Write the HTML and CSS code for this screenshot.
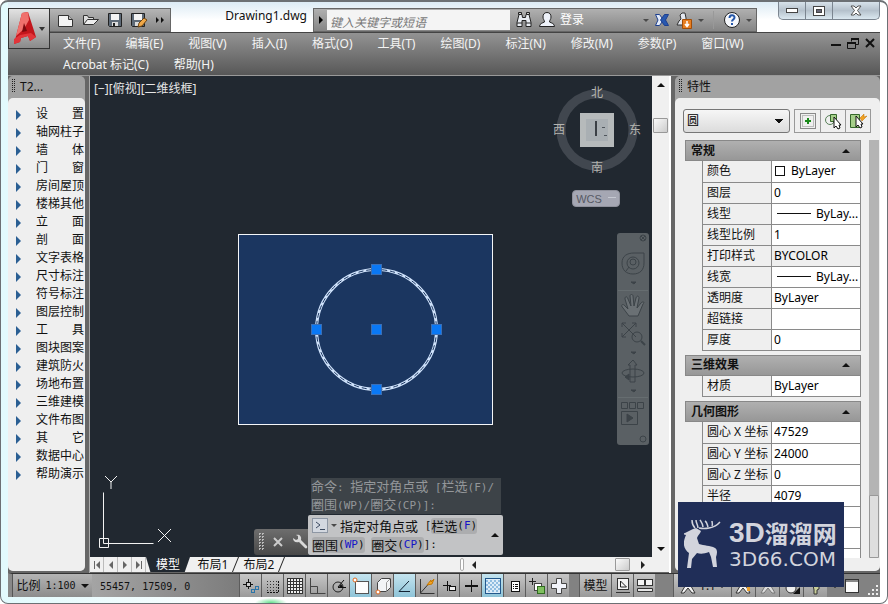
FILE: index.html
```html
<!DOCTYPE html>
<html lang="zh-CN">
<head>
    <meta charset="UTF-8">
    <meta name="viewport" content="width=device-width, initial-scale=1.0">
    <title>Drawing1.dwg</title>
    <link rel="stylesheet" href="styles.css">
</head>
<body>
<div class="window">
    <header class="titlebar">
        <button class="app-btn" aria-label="应用程序菜单">
            <svg width="40" height="40" viewBox="0 0 40 40">
                <path d="M13 4 L19 3 L27 28 L21 32 L19 27 L12 29 L11 33 L5 35 Z" fill="#c3161c"/>
                <path d="M13 4 L19 3 L20 11 L15 20 L7 27 Z" fill="#f0706c"/>
                <path d="M15 14 L18 22 L13 23 Z" fill="#7c0a0e"/>
                <path d="M5 30 L11 26 L22 24 L27 28 L21 32 L19 27 L12 29 L11 33 L5 35 Z" fill="#e2353a"/>
                <path d="M30 18h6l-3 4z" fill="#333"/>
            </svg>
        </button>
        <div class="quick-access">
            <button aria-label="新建"><svg width="18" height="16" viewBox="0 0 18 16"><path d="M1.500 3.500h10l4 4v7h-14z" fill="#f4f4f4" stroke="#333"/><path d="M11.500 3.500v4h4" fill="#bbb" stroke="#333"/></svg></button>
            <button aria-label="打开"><svg width="18" height="16" viewBox="0 0 18 16"><path d="M1.500 12.500v-9h4l1 2h5v3" fill="#ddd" stroke="#333"/><path d="M1.500 12.500l4-5h11l-5 5z" fill="#eee" stroke="#333"/></svg></button>
            <button aria-label="保存"><svg width="16" height="16" viewBox="0 0 16 16"><path d="M1.500 1.500h13v13h-12l-1-1z" fill="#5e6a77" stroke="#222"/><path d="M4 2h8v6h-8z" fill="#f4f4f4"/><path d="M5 10h6v4h-6z" fill="#ddd"/><path d="M6 11h2v3h-2z" fill="#222"/></svg></button>
            <button aria-label="另存为"><svg width="18" height="16" viewBox="0 0 18 16"><path d="M1.500 1.500h13v13h-12l-1-1z" fill="#5e6a77" stroke="#222"/><path d="M4 2h8v6h-8z" fill="#f4f4f4"/><path d="M5 10h6v4h-6z" fill="#ddd"/><path d="M8 15l1-4 5-5 3 2-5 6z" fill="#f0a848" stroke="#6b4312"/></svg></button>
            <button aria-label="更多"><svg width="10" height="8" viewBox="0 0 10 8"><path d="M1 1l3 3-3 3zM6 1l3 3-3 3z" fill="#111"/></svg></button>
        </div>
        <h1 class="doc-title">Drawing1.dwg</h1>
        <div class="infocenter">
            <button class="expand" aria-label="展开"><svg width="6" height="8"><path d="M1 0l4 4-4 4z" fill="#000"/></svg></button>
            <input type="text" placeholder="键入关键字或短语" aria-label="键入关键字或短语">
            <button aria-label="搜索"><svg width="18" height="18" viewBox="0 0 18 18"><path d="M4 3.500h3l.5 3h3l.5-3h3l2 8v4h-5v-6h-4v6h-5v-4z" fill="#e8ecf2" stroke="#222"/><path d="M2 12h5M11 12h5M3.500 1.500h3v2h-3zM11.500 1.500h3v2h-3z" fill="#ccc" stroke="#222"/></svg></button>
            <button class="sign-in"><svg width="18" height="18" viewBox="0 0 18 18"><path d="M9 1.500c3 0 4 2 4 4.500s-1.500 3-1.500 5c2 1 5 1.500 5 4.500h-15c0-3 3-3.500 5-4.500 0-2-1.500-2.500-1.500-5s1-4.500 4-4.500z" fill="#eef2fa" stroke="#222"/></svg><span>登录</span></button>
            <i class="caret far"></i>
            <button aria-label="Exchange"><svg width="16" height="16" viewBox="0 0 16 16"><path d="M1.500 2.500h4l4 5.500-4 5.500h-4l2.500-5.500z" fill="#e4ecfa" stroke="#1d3f8f"/><path d="M14.500 2.500h-4l-4 5.500 4 5.500h4l-3-5.500z" fill="#2858b0" stroke="#1d3f8f"/></svg></button>
            <button aria-label="更新"><svg width="18" height="18" viewBox="0 0 18 18"><path d="M2 14l2-4 2-2-1-4 2-2h3l1 5v7z" fill="#e4e8f0" stroke="#333"/><path d="M7.500 8.500h9v9h-9z" fill="#e87f22" stroke="#a34d07"/><path d="M12 10v5M10 13l2 2.500 2-2.500" stroke="#fff" stroke-width="1.500" fill="none"/></svg></button>
            <i class="caret"></i>
            <span class="rule"></span>
            <button aria-label="帮助"><svg width="18" height="18" viewBox="0 0 18 18"><circle cx="9" cy="9" r="7.500" fill="#f6f8fc" stroke="#222"/><path d="M6.500 7c0-3.500 5-3.500 5-.5 0 2-2.500 2-2.500 4M9 12v2" fill="none" stroke="#2456a8" stroke-width="2"/></svg></button>
            <i class="caret"></i>
        </div>
        <div class="win-btns">
            <button aria-label="最小化"><svg width="14" height="8"><rect x="1.500" y="1.500" width="11" height="4" fill="#fff" stroke="#444"/></svg></button>
            <button aria-label="最大化"><svg width="12" height="10"><rect x=".5" y=".5" width="11" height="9" fill="#fff" stroke="#444"/><rect x="3.500" y="3.500" width="5" height="3" fill="#667" stroke="#444"/></svg></button>
            <button class="close" aria-label="关闭"><svg width="12" height="11" viewBox="0 0 12 11"><path d="M1 1h3l2 2 2-2h3l-3.500 4.500 3.500 4.500h-3l-2-2-2 2h-3l3.500-4.500z" fill="#fff" stroke="#555"/></svg></button>
        </div>
    </header>

    <div class="menu-area">
        <nav class="menubar">
            <a href="#">文件(F)</a>
            <a href="#">编辑(E)</a>
            <a href="#">视图(V)</a>
            <a href="#">插入(I)</a>
            <a href="#">格式(O)</a>
            <a href="#">工具(T)</a>
            <a href="#">绘图(D)</a>
            <a href="#">标注(N)</a>
            <a href="#">修改(M)</a>
            <a href="#">参数(P)</a>
            <a href="#">窗口(W)</a>
            <a href="#">Acrobat 标记(C)</a>
            <a href="#">帮助(H)</a>
        </nav>
        <div class="mdi-btns">
            <button aria-label="最小化文档"><svg width="12" height="12"><path d="M1 8h10" stroke="#111" stroke-width="2"/></svg></button>
            <button aria-label="还原文档"><svg width="12" height="12"><path d="M4.500 4.500v-3h7v6h-3M.5 5.500h8v6h-8z" fill="none" stroke="#111"/><path d="M4 2h8M0 6h9" stroke="#111" stroke-width="2"/></svg></button>
            <button aria-label="关闭文档"><svg width="12" height="12"><path d="M2 2l8 8M10 2l-8 8" stroke="#111" stroke-width="2"/></svg></button>
        </div>
    </div>

    <main class="workspace">
        <aside class="panel tools">
            <h2 class="panel-title"><i class="grip"></i>T2...</h2>
            <ul class="tool-list">
                <li><a href="#"><span>设</span><span>置</span></a></li>
                <li><a href="#">轴网柱子</a></li>
                <li><a href="#"><span>墙</span><span>体</span></a></li>
                <li><a href="#"><span>门</span><span>窗</span></a></li>
                <li><a href="#">房间屋顶</a></li>
                <li><a href="#">楼梯其他</a></li>
                <li><a href="#"><span>立</span><span>面</span></a></li>
                <li><a href="#"><span>剖</span><span>面</span></a></li>
                <li><a href="#">文字表格</a></li>
                <li><a href="#">尺寸标注</a></li>
                <li><a href="#">符号标注</a></li>
                <li><a href="#">图层控制</a></li>
                <li><a href="#"><span>工</span><span>具</span></a></li>
                <li><a href="#">图块图案</a></li>
                <li><a href="#">建筑防火</a></li>
                <li><a href="#">场地布置</a></li>
                <li><a href="#">三维建模</a></li>
                <li><a href="#">文件布图</a></li>
                <li><a href="#"><span>其</span><span>它</span></a></li>
                <li><a href="#">数据中心</a></li>
                <li><a href="#">帮助演示</a></li>
            </ul>
        </aside>

        <section class="viewport">
            <div class="view-row">
                <div class="canvas">
                    <div class="view-label">[−][俯视][二维线框]</div>

                    <svg class="drawing" width="255" height="191" viewBox="0 0 255 191">
                        <rect x=".5" y=".5" width="254" height="190" fill="#1b3660" stroke="#f4f6f8"/>
                        <circle cx="138.500" cy="95.500" r="60" fill="none" stroke="#cfe2fb" stroke-width="3"/>
                        <circle cx="138.500" cy="95.500" r="60" fill="none" stroke="#1b3660" stroke-width="1" stroke-dasharray="5 3"/>
                        <g fill="#0a78f5" stroke="#3b6fb5">
                            <rect x="133.500" y="30.500" width="10" height="10"/>
                            <rect x="133.500" y="90.500" width="10" height="10"/>
                            <rect x="133.500" y="150.500" width="10" height="10"/>
                            <rect x="73.500" y="90.500" width="10" height="10"/>
                            <rect x="193.500" y="90.500" width="10" height="10"/>
                        </g>
                    </svg>

                    <svg class="ucs" width="76" height="76" viewBox="0 0 76 76" fill="none" stroke="#f2f2f2">
                        <path d="M1.500 63.500h9v9h-9zM5.500 68.500v-51M5.500 68.500h50"/>
                        <path d="M7 1l6 6 6-6M13 7v7M60 54l13 13M73 54l-13 13"/>
                    </svg>

                    <div class="viewcube">
                        <svg width="90" height="90" viewBox="0 0 90 90">
                            <circle cx="45" cy="45" r="36" fill="none" stroke="#41474f" stroke-width="9"/>
                            <rect x="28" y="28" width="34" height="34" fill="#b6babb"/>
                            <rect x="34" y="34" width="22" height="22" fill="#a9afb3"/>
                            <path d="M44 36v15" stroke="#3b4046" stroke-width="2"/>
                            <path d="M50 42.500h3M52 50.500h3" stroke="#50565c"/>
                        </svg>
                        <span class="north">北</span>
                        <span class="west">西</span>
                        <span class="east">东</span>
                        <span class="south">南</span>
                    </div>
                    <button class="wcs">WCS<svg width="8" height="4"><path d="M0 .5h8" stroke="#c6c9d2"/></svg></button>

                    <div class="navbar">
                        <svg width="32" height="212" viewBox="0 0 32 212" fill="none" stroke="#3c4348">
                            <circle cx="26" cy="5" r="3"/><path d="M24 3l4 4M28 3l-4 4"/>
                            <path d="M5 30c0-7 5-10 12-10h10v10c0 7-4 11-11 11s-11-4-11-11z"/>
                            <circle cx="16" cy="30" r="6"/><circle cx="16" cy="29" r="3"/><path d="M12 34l-3 4"/>
                            <path d="M14 49h5l-2 2z" fill="#3c4348"/>
                            <path d="M1 57.500h30" stroke="#666d70"/>
                            <path d="M12 83l-6-8c-3-3 0-5 2-2l3 3-3-10c0-3 2-3 3 0l3 7-1-10c0-2 3-2 3 0l1 10 2-8c1-3 3-2 3 0l-2 10 4-5c2-2 4-1 2 1l-5 12z" fill="#6a7074"/>
                            <path d="M5 90l14 14M19 90l-14 14M5 94v-4h4M15 90h4v4M5 100v4h4"/>
                            <circle cx="20" cy="104" r="5"/><path d="M24 108l4 4" stroke-width="2"/>
                            <path d="M14 119h5l-2 2z" fill="#3c4348"/>
                            <path d="M13 149v-17h-2l5-5 4 5h-2v17z"/>
                            <ellipse cx="16" cy="140" rx="11" ry="4"/><path d="M8 144l4-3v6z" fill="#3c4348"/>
                            <path d="M14 157h5l-2 2z" fill="#3c4348"/>
                            <path d="M1 164.500h30" stroke="#666d70"/>
                            <path d="M4.500 169.500h6v6h-6zM12.500 169.500h6v6h-6zM20.500 169.500h6v6h-6zM4.500 178.500h16v13h-16z"/>
                            <path d="M10 181l6 4-6 4z" fill="#3c4348"/>
                            <circle cx="26" cy="206" r="3"/>
                        </svg>
                    </div>

                    <div class="cmd">
                        <div class="cmd-handle">
                            <i class="grip light"></i>
                            <button aria-label="关闭命令行"><svg width="12" height="12"><path d="M2 2l8 8M10 2l-8 8" stroke="#ccc" stroke-width="2"/></svg></button>
                            <button aria-label="自定义"><svg width="16" height="16" viewBox="0 0 16 16"><path d="M1 4l3 2 2-1V2L4 1c3-1 6 1 5 5l6 6c1 2-1 3-2 2L7 8C3 9 1 7 1 4z" fill="#d8d8d8"/></svg></button>
                        </div>
                        <div class="cmd-main">
                            <p class="cmd-history">命令<span>: </span>指定对角点或<span> [</span>栏选<span>(F)/</span><br>圈围<span>(WP)/</span>圈交<span>(CP)]:</span></p>
                            <div class="cmd-line">
                                <div>
                                    <div class="cmd-row">
                                        <i class="prompt"><svg width="14" height="13"><path d="M3 3l4 3-4 3M7 10.500h5" stroke="#3c4a60" fill="none"/></svg></i><i class="caret"></i>指定对角点或<span> [</span><button>栏选<span>(<b>F</b>)</span></button>
                                    </div>
                                    <div class="cmd-row">
                                        <button>圈围<span>(<b>WP</b>)</span></button><span> </span><button>圈交<span>(<b>CP</b>)</span></button><span>]:</span>
                                    </div>
                                </div>
                                <i class="up"></i>
                            </div>
                        </div>
                    </div>
                </div>
                <div class="vscroll"><i class="up"></i><i class="thumb"></i><i class="down"></i></div>
            </div>
            <div class="tab-row">
                <div class="tab-nav">
                    <button aria-label="第一个"><svg width="8" height="8"><path d="M1.500 0v8" stroke="#666"/><path d="M7 0v8l-4-4z" fill="#666"/></svg></button>
                    <button aria-label="上一个"><svg width="8" height="8"><path d="M6 0v8l-4-4z" fill="#666"/></svg></button>
                    <button aria-label="下一个"><svg width="8" height="8"><path d="M2 0v8l4-4z" fill="#666"/></svg></button>
                    <button aria-label="最后一个"><svg width="8" height="8"><path d="M6.500 0v8" stroke="#666"/><path d="M1 0v8l4-4z" fill="#666"/></svg></button>
                </div>
                <div class="tabs">
                    <button class="tab active">模型</button>
                    <button class="tab">布局1</button>
                    <button class="tab">布局2</button>
                </div>
                <div class="hscroll"><i class="splitter"></i><i class="left"></i><i class="thumb"></i><i class="right"></i></div>
            </div>
        </section>

        <aside class="panel props">
            <h2 class="panel-title"><i class="grip"></i>特性</h2>
            <div class="picker">
                <select aria-label="对象类型"><option>圆</option></select>
                <div class="picker-btns">
                    <button aria-label="切换 PICKADD"><svg width="18" height="18"><rect x="1.500" y="1.500" width="15" height="15" fill="none" stroke="#222" stroke-dasharray="1 1"/><rect x="3.500" y="3.500" width="11" height="11" fill="none" stroke="#888" stroke-dasharray="1 1"/><path d="M9 6v6M6 9h6" stroke="#1a8a1a" stroke-width="2"/></svg></button>
                    <button aria-label="选择对象"><svg width="18" height="18"><circle cx="6" cy="8" r="4.500" fill="none" stroke="#577f57"/><path d="M6.500 2.500h6v7h-6z" fill="#a6d08a" stroke="#36682c"/><path d="M10 5v11l2-2 2 3 2-1-1-3h2z" fill="#fff" stroke="#111"/></svg></button>
                    <button aria-label="快速选择"><svg width="18" height="18"><path d="M1.500 2.500h9v13h-9z" fill="#a6d08a" stroke="#36682c"/><path d="M7 4v11l2-2 2 3 2-1-1-3h2z" fill="#fff" stroke="#111"/><path d="M11 6l4-4 0 3 3-1-5 5z" fill="#f0a020" stroke="#c07000" stroke-width=".5"/></svg></button>
                </div>
            </div>
            <div class="prop-body">
                <div class="prop-scroll">
                    <button class="group">常规<i class="up"></i></button>
                    <table>
                        <tr><th><label for="p-color">颜色</label></th><td><div class="value"><i class="swatch"></i><input id="p-color" value="ByLayer"></div></td></tr>
                        <tr><th><label for="p-layer">图层</label></th><td><div class="value"><input id="p-layer" value="0"></div></td></tr>
                        <tr><th><label for="p-ltype">线型</label></th><td><div class="value"><i class="line"></i><input id="p-ltype" value="ByLay..."></div></td></tr>
                        <tr><th><label for="p-lscale">线型比例</label></th><td><div class="value"><input id="p-lscale" value="1"></div></td></tr>
                        <tr class="locked"><th><label for="p-plot">打印样式</label></th><td><div class="value"><input id="p-plot" value="BYCOLOR" readonly></div></td></tr>
                        <tr><th><label for="p-lweight">线宽</label></th><td><div class="value"><i class="line"></i><input id="p-lweight" value="ByLay..."></div></td></tr>
                        <tr><th><label for="p-trans">透明度</label></th><td><div class="value"><input id="p-trans" value="ByLayer"></div></td></tr>
                        <tr><th><label for="p-link">超链接</label></th><td><div class="value"><input id="p-link" value=""></div></td></tr>
                        <tr><th><label for="p-thick">厚度</label></th><td><div class="value"><input id="p-thick" value="0"></div></td></tr>
                    </table>
                    <button class="group">三维效果<i class="up"></i></button>
                    <table>
                        <tr><th><label for="p-mat">材质</label></th><td><div class="value"><input id="p-mat" value="ByLayer"></div></td></tr>
                    </table>
                    <button class="group">几何图形<i class="up"></i></button>
                    <table>
                        <tr><th><label for="p-x">圆心 X 坐标</label></th><td><div class="value"><input id="p-x" value="47529"></div></td></tr>
                        <tr><th><label for="p-y">圆心 Y 坐标</label></th><td><div class="value"><input id="p-y" value="24000"></div></td></tr>
                        <tr><th><label for="p-z">圆心 Z 坐标</label></th><td><div class="value"><input id="p-z" value="0"></div></td></tr>
                        <tr><th><label for="p-r">半径</label></th><td><div class="value"><input id="p-r" value="4079"></div></td></tr>
                        <tr><th></th><td></td></tr>
                        <tr><th></th><td></td></tr>
                        <tr><th></th><td></td></tr>
                    </table>
                </div>
                <div class="prop-bar"><i class="thumb"></i></div>
            </div>
        </aside>
    </main>

    <footer class="statusbar">
        <button class="scale">比例 <span>1:100</span><i class="down"></i></button>
        <div class="coords">55457, 17509, 0</div>
        <div class="toggles">
            <button aria-label="推断约束"><svg width="18" height="18"><path d="M1 7.500h10M6.500 2v10" stroke="#111"/><rect x="4.500" y="5.500" width="4" height="4" fill="#ccc" stroke="#111"/><rect x="9.500" y="12.500" width="3" height="3" fill="none" stroke="#2c74a8"/><rect x="13.500" y="9.500" width="3" height="3" fill="none" stroke="#2c74a8"/></svg></button>
            <button aria-label="捕捉"><svg width="18" height="18"><path d="M3 4.500h10M3 7.500h10M3 10.500h10M3 13.500h10" stroke="#333" stroke-dasharray="1 2"/><path d="M14.500 4v11M3 15.500h12" stroke="#111" stroke-dasharray="2 1"/></svg></button>
            <button aria-label="栅格"><svg width="18" height="18"><path d="M1 1h16v16h-16z" fill="#eee"/><path d="M1 1.500h16M1 4.500h16M1 7.500h16M1 10.500h16M1 13.500h16M1 16.500h16M1.500 1v16M4.500 1v16M7.500 1v16M10.500 1v16M13.500 1v16M16.500 1v16" stroke="#333"/></svg></button>
            <button aria-label="正交"><svg width="18" height="18"><path d="M2.500 1v15.500h15M2.500 9.500h7v7" fill="none" stroke="#444"/></svg></button>
            <button aria-label="极轴"><svg width="18" height="18"><circle cx="8" cy="10" r="5" fill="none" stroke="#222"/><path d="M8 10.500h8M8 10l6-7" stroke="#111"/><path d="M11 7l2 3h-4z" fill="#111"/></svg></button>
            <button class="on" aria-label="对象捕捉"><svg width="18" height="18"><rect x="3.500" y="4.500" width="13" height="12" fill="#fdfdfd" stroke="#555"/><circle cx="3" cy="3" r="2" fill="#fff" stroke="#e06a20"/></svg></button>
            <button aria-label="三维对象捕捉"><svg width="18" height="18"><path d="M3.500 5.500l4-4h9v9l-4 4h-9z" fill="#f2f4f6" stroke="#444"/><path d="M12.500 14.500v-9l4-4" fill="none" stroke="#999"/><circle cx="4" cy="15" r="2" fill="#fff" stroke="#e06a20"/></svg></button>
            <button class="on" aria-label="对象追踪"><svg width="18" height="18"><path d="M13 4l-10 10.500h11" stroke="#123" fill="none"/></svg></button>
            <button aria-label="动态 UCS"><svg width="18" height="18"><path d="M2.500 2v14.500h14M2.500 16l8-9" fill="none" stroke="#333"/><path d="M9 8l4-5 0 2 3-3-2 5z" fill="#f5a623" stroke="#c77800"/></svg></button>
            <button aria-label="动态输入"><svg width="18" height="18"><path d="M3 8.500h8M7.500 4v10" stroke="#111"/><rect x="9.500" y="9.500" width="6" height="4" fill="#eee" stroke="#111"/></svg></button>
            <button aria-label="线宽"><svg width="18" height="18"><path d="M3 9h13" stroke="#111" stroke-width="2"/><path d="M9.500 3v12" stroke="#111"/></svg></button>
            <button class="on" aria-label="透明度"><svg width="18" height="18"><rect x="1.500" y="1.500" width="15" height="15" fill="#dcecf8" stroke="#22588c"/><path d="M2 4h14M2 8h14M2 12h14" stroke="#8fbde0" stroke-width="2" stroke-dasharray="2 2"/><path d="M4 6h12M4 10h12M4 14h12" stroke="#8fbde0" stroke-width="2" stroke-dasharray="2 2"/></svg></button>
            <button aria-label="快捷特性"><svg width="18" height="18"><rect x="5.500" y="4.500" width="8" height="10" fill="#fff" stroke="#111"/><path d="M7 7.500h5M7 9.500h5M7 11.500h5" stroke="#111" stroke-dasharray="1 1 3 0"/></svg></button>
            <button aria-label="选择循环"><svg width="18" height="18"><path d="M1 4.500h7M4.500 1v7" stroke="#222"/><rect x="6.500" y="6.500" width="7" height="7" fill="#fff" stroke="#444"/><rect x="9.500" y="9.500" width="7" height="7" fill="#7fbf5f" stroke="#2f6a1f"/></svg></button>
            <button aria-label="注释监视器"><svg width="18" height="18"><path d="M6.500 1.500h5v5h5v5h-5v5h-5v-5h-5v-5h5z" fill="#f2f4fa" stroke="#444"/></svg></button>
        </div>
        <div class="spacer"></div>
        <div class="toggles space">
            <button class="text">模型</button>
            <button aria-label="快速查看布局"><svg width="18" height="18"><rect x="3.500" y="1.500" width="11" height="11" fill="#f4f4f4" stroke="#333"/><path d="M6.500 4v6h6z" fill="none" stroke="#222"/><path d="M2 15.500h14" stroke="#333"/></svg></button>
            <button aria-label="快速查看图形"><svg width="18" height="18"><rect x="1.500" y="2.500" width="7" height="6" fill="#f4f4f4" stroke="#333"/><rect x="9.500" y="2.500" width="7" height="6" fill="#f4f4f4" stroke="#333"/><path d="M1.500 11.500h15v3h-15z" fill="#e6e6e6" stroke="#333"/></svg></button>
        </div>
        <div class="spacer wide"></div>
        <div class="anno">
            <button><svg width="18" height="18"><path d="M9 4l7 12h-3l-4-5-4 5h-3z" fill="#f4f4f4" stroke="#333"/></svg>1:1<i class="down"></i></button>
            <button aria-label="注释可见性"><svg width="18" height="18"><path d="M8 4l7 12h-3l-4-5-4 5h-3z" fill="#f4f4f4" stroke="#333"/><path d="M12 9h3v5h-3z" fill="#e8a030"/></svg></button>
            <button aria-label="自动缩放"><svg width="18" height="18"><path d="M9 4l7 12h-3l-4-5-4 5h-3z" fill="#ddd" stroke="#777"/></svg></button>
            <button aria-label="切换工作空间"><svg width="18" height="18"><circle cx="8" cy="11" r="5" fill="#eee" stroke="#333"/><path d="M17 10v7h-7z" fill="#111"/></svg></button>
            <button aria-label="锁定"><svg width="18" height="18"><path d="M6 8h6v4l-2 1v4h-3v-4z" fill="#c9cf9a" stroke="#333"/></svg></button>
        </div>
        <i class="down end"></i>
        <button class="clean" aria-label="全屏显示"><svg width="16" height="16"><rect x="1.500" y="1.500" width="13" height="13" fill="#fcfcfc" stroke="#333"/><path d="M2 3h12" stroke="#888" stroke-width="2"/></svg></button>
        <svg class="resize" width="13" height="13"><g fill="#eee"><path d="M9 1h2v2h-2zM5 5h2v2h-2zM9 5h2v2h-2zM1 9h2v2h-2zM5 9h2v2h-2zM9 9h2v2h-2z"/></g></svg>
    </footer>

    <div class="brand">
        <svg width="38" height="52" viewBox="0 0 38 52">
            <path d="M1 14l8-4 3-1 5 3c-1 3-3 4-4 7l2 6c5 2 11 1 16 4 3 2 2 6 1 9l1 10h-4l-2-10-2-5c-5 2-9 2-12 1l-5 6-1 9h-4l2-15c-5-4-7-9-3-18l-4-1z" fill="#d2d4dd"/>
            <path d="M11 9C9 7 8 5 8 1M14 9c0-3-2-5-2-8M15 9c5 1 15 1 21-6M19 8c0-3-1-4-3-7M24 8c-1-3-1-5-3-6M28 7c1-2 0-3 0-5" fill="none" stroke="#d2d4dd" stroke-width="1.500"/>
        </svg>
        <div>
            <div class="brand-name"><span>3D</span>溜溜网</div>
            <div class="brand-url">3D66.COM</div>
        </div>
    </div>
</div>
</body>
</html>
```
FILE: styles.css
```css
* {
    margin: 0;
    padding: 0;
    box-sizing: border-box;
}

body {
    font-family: "Noto Sans", "Noto Sans CJK SC", sans-serif;
    font-size: 12px;
    line-height: 16px;
    color: #111;
    background: #fff;
}

button {
    font: inherit;
    color: inherit;
    background: none;
    border: none;
    display: flex;
    align-items: center;
    justify-content: center;
}

a {
    color: inherit;
    text-decoration: none;
}

svg {
    display: block;
    flex: none;
}

/* Window frame */
.window {
    position: relative;
    display: flex;
    flex-direction: column;
    height: 100vh;
    min-height: 560px;
    padding: 0 7px 6px;
    border: 1px solid #6c7074;
    border-top-width: 2px;
    border-radius: 8px;
    background:
        radial-gradient(ellipse 16px 5px at 270px 100%, #5fe08a, transparent),
        linear-gradient(90deg, #e2fafd, #fff 30%);
}

/* Small arrows */
.up, .down, .left, .right, .caret {
    flex: none;
    border: 4px solid transparent;
}

.up {
    border-top: none;
    border-bottom-color: #111;
}

.down {
    border-bottom: none;
    border-top-color: #111;
}

.left {
    border-left: none;
    border-right-color: #222;
}

.right {
    border-right: none;
    border-left-color: #222;
}

.caret {
    border-width: 3px;
    border-bottom: none;
    border-top-color: #4a4a4a;
}

.grip {
    flex: none;
    width: 5px;
    height: 13px;
    background: conic-gradient(#222 25%, transparent 0) 0 0 / 2px 2px;
}

.grip.light {
    height: 18px;
    width: 6px;
    background: conic-gradient(#bbb 25%, transparent 0) 0 0 / 3px 3px;
}

/* Title bar */
.titlebar {
    position: relative;
    display: flex;
    height: 30px;
    padding-top: 6px;
    background: linear-gradient(#dcebf5, #fff 60%);
}

.app-btn {
    position: absolute;
    left: 0;
    top: 6px;
    width: 42px;
    height: 41px;
    border: 1px solid #333;
    background: linear-gradient(#e2e2e2, #8a8a8a);
    z-index: 1;
}

.quick-access {
    display: flex;
    align-items: center;
    gap: 7px;
    width: 163px;
    padding-left: 49px;
    border: 1px solid #666;
    border-left: none;
    background: linear-gradient(#b5b5b5, #868686);
}

.doc-title {
    flex: 0 0 142px;
    padding-right: 6px;
    text-align: right;
    font-size: 12px;
    font-weight: 400;
}

.infocenter {
    flex: 1;
    display: flex;
    align-items: center;
    gap: 5px;
    min-width: 0;
    border: 1px solid #666;
    background: linear-gradient(#b0b0b0, #858585);
    color: #fff;
}

.infocenter .expand {
    width: 13px;
    margin-right: -5px;
}

.infocenter input {
    flex: 1;
    min-width: 60px;
    height: 20px;
    padding: 2px 3px 0;
    border: none;
    background: #f4f4f4;
    font: italic 12px "Noto Sans CJK SC", sans-serif;
}

.infocenter input::placeholder {
    color: #777;
}

.sign-in {
    gap: 4px;
}

.infocenter .far {
    margin-left: 54px;
}

.rule {
    width: 1px;
    height: 18px;
    margin: 0 4px;
    background: #999;
}

.infocenter .caret:last-child {
    margin-right: 4px;
}

.win-btns {
    display: flex;
    height: 18px;
    margin: -6px 0 0 21px;
    border: 1px solid #7b8590;
    border-top: none;
    border-radius: 0 0 5px 5px;
    background: linear-gradient(#d7e2ea, #b5c1cc 50%, #dbe8f0);
}

.win-btns button {
    width: 27px;
    border-right: 1px solid #7b8590;
}

.win-btns .close {
    width: 46px;
    border-right: none;
}

/* Menu */
.menu-area {
    display: flex;
    justify-content: space-between;
    padding: 0 4px 0 55px;
    border-top: 1px solid #444;
    border-bottom: 1px solid #999;
    background: linear-gradient(#939393, #575757);
}

.menubar {
    display: flex;
    flex-wrap: wrap;
    column-gap: 25px;
    color: #f4f4f4;
    line-height: 21px;
}

.mdi-btns {
    display: flex;
    gap: 5px;
    height: 20px;
}

/* Workspace */
.workspace {
    flex: 1;
    display: flex;
    min-height: 0;
    background: #666;
}

.panel {
    display: flex;
    flex-direction: column;
    margin-bottom: 2px;
    border-radius: 5px;
    overflow: hidden;
    background: #a2a2a2;
}

.panel-title {
    display: flex;
    gap: 4px;
    height: 22px;
    padding: 3px 3px 0;
    font-size: 12px;
    font-weight: 400;
}

.tools {
    flex: 0 0 77px;
}

.tool-list {
    flex: 1;
    padding-top: 7px;
    list-style: none;
    border-radius: 5px 5px 0 0;
    background: #efefef;
}

.tool-list a {
    display: flex;
    justify-content: space-between;
    position: relative;
    width: 76px;
    padding-left: 28px;
    line-height: 18px;
    white-space: nowrap;
}

.tool-list a::before {
    content: "";
    position: absolute;
    left: 8px;
    top: 5px;
    border: 5px solid transparent;
    border-left-color: #2b5f93;
    border-right: none;
}

.viewport {
    flex: 1;
    display: flex;
    flex-direction: column;
    min-width: 0;
    margin: 0 4px 0 4px;
    border-left: 1px solid #aaa;
    border-right: 2px solid #fff;
}

.view-row {
    flex: 1;
    display: flex;
    min-height: 0;
}

.canvas {
    position: relative;
    flex: 1;
    overflow: hidden;
    background: #212830;
}

.view-label {
    padding: 5px 4px;
    color: #e6e6e6;
}

.drawing {
    position: absolute;
    left: 148px;
    top: 158px;
}

.ucs {
    position: absolute;
    left: 8px;
    bottom: 6px;
}

.viewcube {
    position: absolute;
    right: 10px;
    top: 9px;
    width: 90px;
    height: 90px;
    color: #b4b4b0;
}

.viewcube span {
    position: absolute;
}

.north {
    left: 39px;
    top: 0;
}

.south {
    left: 39px;
    bottom: -1px;
}

.west {
    left: 1px;
    top: 37px;
}

.east {
    right: 1px;
    top: 37px;
}

.wcs {
    position: absolute;
    right: 32px;
    top: 114px;
    gap: 6px;
    width: 48px;
    height: 17px;
    border: 1px solid #8f919c;
    border-radius: 4px;
    background: #a5a7b3;
    color: #565964;
    font: 11px "Liberation Sans", sans-serif;
}

.navbar {
    position: absolute;
    right: 3px;
    top: 157px;
    border-radius: 3px;
    background: #5a6064;
}

/* Command line */
.cmd {
    position: absolute;
    left: 164px;
    bottom: 2px;
    display: flex;
    align-items: flex-end;
    font-size: 13px;
}

.cmd span {
    font-family: "DejaVu Sans Mono", monospace;
    font-size: 11px;
    white-space: pre;
}

.cmd-handle {
    display: flex;
    align-items: center;
    gap: 8px;
    width: 54px;
    height: 26px;
    padding-left: 4px;
    border-radius: 3px 0 0 3px;
    background: linear-gradient(#6e6e6e, #484848);
}

.cmd-history {
    width: 190px;
    margin: 0 0 1px 3px;
    line-height: 16px;
    background: #3d4348;
    color: #94979a;
    white-space: nowrap;
}

.cmd-line {
    display: flex;
    align-items: center;
    justify-content: space-between;
    width: 195px;
    height: 40px;
    padding: 0 4px;
    border-radius: 2px;
    background: #c2c3c5;
}

.cmd-row {
    display: flex;
    align-items: center;
    height: 19px;
    white-space: nowrap;
}

.cmd-row button {
    height: 16px;
    border-radius: 3px;
    background: #acadaf;
}

.cmd-row b {
    font-weight: 400;
    color: #1414c8;
}

.cmd-row .caret {
    margin: 0 3px;
}

.prompt {
    border: 1px solid #8e97a4;
    background: #d3d8e0;
}

/* Scroll bars */
.vscroll {
    display: flex;
    flex-direction: column;
    align-items: center;
    width: 17px;
    padding: 7px 0 6px;
    background: #f0f0f0;
}

.vscroll .down {
    margin-top: auto;
}

.vscroll .thumb {
    width: 15px;
    height: 15px;
    margin-top: 31px;
}

.thumb {
    flex: none;
    border: 1px solid #999;
    border-radius: 1px;
    background: linear-gradient(135deg, #fafafa, #ccc);
}

.tab-row {
    display: flex;
    height: 15px;
    margin-bottom: 1px;
    background: #f0f0f0;
}

.tab-nav {
    display: flex;
}

.tab-nav button {
    width: 14px;
    border-right: 1px solid #bbb;
}

.tabs {
    display: flex;
}

.tab {
    position: relative;
    width: 46px;
}

.tab::after {
    content: "";
    position: absolute;
    top: 0;
    right: 0;
    bottom: 0;
    border-right: 1px solid #222;
    transform: skewX(-22deg);
}

.tab.active {
    width: 44px;
    color: #fff;
    background: #212830;
    clip-path: polygon(0 0, 100% 0, 88% 100%, 10% 100%);
}

.hscroll {
    flex: 1;
    display: flex;
    align-items: center;
    padding-right: 24px;
}

.splitter {
    width: 4px;
    height: 13px;
    margin-left: auto;
    border: 1px solid #aaa;
    border-radius: 2px;
    background: #fff;
}

.hscroll .left {
    margin: 0 139px 0 8px;
}

.hscroll .thumb {
    width: 15px;
    height: 13px;
    margin-right: 11px;
}

/* Properties palette */
.props {
    flex: 0 0 205px;
}

.picker {
    display: flex;
    align-items: center;
    gap: 4px;
    padding: 11px 9px 7px 8px;
    border-radius: 5px 5px 0 0;
    background: #efefef;
}

.picker select {
    flex: 1;
    height: 24px;
    padding: 0 3px;
    border: 1px solid #777;
    border-radius: 3px;
    appearance: none;
    background:
        conic-gradient(from -39deg at 50% 100%, #111 78deg, transparent 0) right 6px center / 8px 5px no-repeat,
        linear-gradient(#f6f6f6, #dcdcdc);
    background:
        linear-gradient(to bottom left, #111 50%, transparent 50%) right 10px center / 4px 5px no-repeat,
        linear-gradient(to bottom right, #111 50%, transparent 50%) right 6px center / 4px 5px no-repeat,
        linear-gradient(#f6f6f6, #dcdcdc);
    font: inherit;
}

.picker-btns {
    display: flex;
    border: 1px solid #999;
}

.picker-btns button {
    width: 25px;
    height: 22px;
}

.picker-btns button + button {
    border-left: 1px solid #999;
}

.prop-body {
    flex: 1;
    display: flex;
    justify-content: space-between;
    min-height: 0;
    padding: 0 1px 13px 10px;
    background: #efefef;
}

.prop-scroll {
    width: 176px;
    overflow: hidden;
}

.group {
    justify-content: space-between;
    width: 100%;
    height: 21px;
    padding: 0 10px 0 5px;
    border: 1px solid #888;
    background: linear-gradient(#b0b0b0, #979797);
    font-weight: 700;
}

.prop-scroll table {
    width: 159px;
    margin: 0 0 4px 17px;
    border-collapse: collapse;
    table-layout: fixed;
}

.prop-scroll tr {
    height: 21px;
}

.prop-scroll th,
.prop-scroll td {
    border: 1px solid #8a8a8a;
    border-top: none;
    overflow: hidden;
    white-space: nowrap;
    text-align: left;
    font-weight: 400;
}

.prop-scroll th {
    width: 69px;
    padding-left: 4px;
}

.prop-scroll td {
    background: #fff;
}

.prop-scroll .locked td {
    background: #efefef;
}

.value {
    display: flex;
    align-items: center;
    padding-left: 2px;
}

.value input {
    flex: 1;
    min-width: 0;
    height: 16px;
    border: none;
    background: none;
    font: inherit;
}

.swatch {
    width: 10px;
    height: 10px;
    margin: 0 6px 0 1px;
    border: 1px solid #111;
}

.line {
    width: 34px;
    height: 1px;
    margin: 0 5px 0 3px;
    background: #111;
}

.prop-bar {
    display: flex;
    flex-direction: column;
    justify-content: flex-end;
    width: 10px;
    background: #b4b4b4;
}

.prop-bar .thumb {
    height: 63px;
    background: #dedede;
}

/* Status bar */
.statusbar {
    display: flex;
    height: 24px;
    border-top: 1px solid #333;
    border-left: 4px solid #888;
    background: #828282;
    font-size: 12px;
}

.scale {
    width: 80px;
    gap: 5px;
    border-left: 1px solid #555;
    background: linear-gradient(#b4b4b4, #8c8c8c);
    white-space: nowrap;
}

.scale span,
.coords {
    font-family: "DejaVu Sans Mono", monospace;
    font-size: 10px;
}

.coords {
    flex: 0 1 147px;
    padding-left: 8px;
    line-height: 25px;
    white-space: nowrap;
    background: linear-gradient(90deg, #a4a4a4, #7c7c7c);
}

.toggles {
    display: flex;
}

.toggles button,
.anno button {
    width: 22px;
    border-left: 1px solid #5c5c5c;
    background: linear-gradient(#c6c6c6, #9a9a9a);
}

.toggles .on {
    background: linear-gradient(#c4e4ef, #8fc4d8);
}

.toggles .text {
    width: 32px;
}

.spacer {
    width: 10px;
}

.spacer.wide {
    width: 18px;
}

.anno {
    flex: 1;
    display: flex;
    min-width: 0;
}

.anno button {
    width: 24px;
}

.anno button:first-child {
    width: 58px;
    gap: 2px;
}

.end {
    margin: 10px 4px 0;
}

.clean {
    width: 18px;
}

.resize {
    align-self: flex-end;
    margin-left: 6px;
}

/* Corner logo */
.brand {
    position: absolute;
    right: 43px;
    bottom: 16px;
    display: flex;
    align-items: center;
    gap: 7px;
    width: 166px;
    height: 85px;
    padding-left: 6px;
    background: #202e58;
    color: #d2d4dd;
    z-index: 2;
}

.brand-name {
    display: flex;
    align-items: center;
    font: 700 24px/28px "Noto Sans CJK SC", sans-serif;
    white-space: nowrap;
}

.brand-name span {
    font: 700 28px/28px "Liberation Sans", sans-serif;
}

.brand-url {
    font: 20px/24px "DejaVu Sans", sans-serif;
}
```
